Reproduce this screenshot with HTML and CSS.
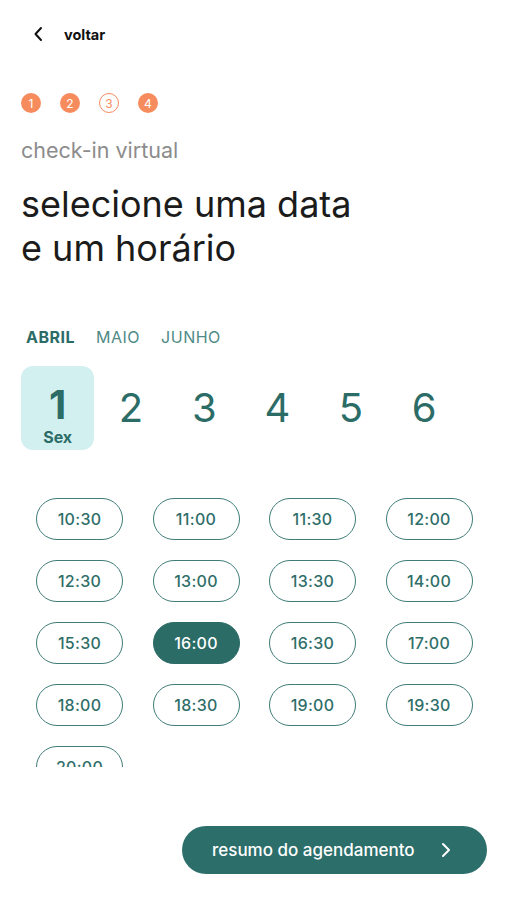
FILE: index.html
```html
<!DOCTYPE html>
<html lang="pt">
<head>
  <meta charset="UTF-8">
  <meta name="viewport" content="width=device-width, initial-scale=1.0">
  <title>Check-in virtual</title>
  <link rel="stylesheet" href="styles.css">
</head>
<body>

<div class="screen">
  <header class="topbar">
    <svg class="back-icon" width="12" height="16" viewBox="0 0 12 16">
      <path d="M8 2 L2.5 8 L8 14" fill="none" stroke="#111" stroke-width="2" stroke-linecap="round" stroke-linejoin="round"/>
    </svg>
    <span class="back-label">voltar</span>
  </header>

  <div class="steps">
    <span class="step">1</span>
    <span class="step">2</span>
    <span class="step current">3</span>
    <span class="step">4</span>
  </div>

  <p class="subtitle">check-in virtual</p>
  <h1>selecione uma data<br>e um horário</h1>

  <nav class="months">
    <span class="month active">ABRIL</span>
    <span class="month">MAIO</span>
    <span class="month">JUNHO</span>
  </nav>

  <div class="days">
    <div class="day selected">
      <span class="day-num">1</span>
      <span class="day-name">Sex</span>
    </div>
    <div class="day"><span class="day-num">2</span></div>
    <div class="day"><span class="day-num">3</span></div>
    <div class="day"><span class="day-num">4</span></div>
    <div class="day"><span class="day-num">5</span></div>
    <div class="day"><span class="day-num">6</span></div>
  </div>

  <div class="slots-scroll">
    <div class="slots">
      <button class="slot">10:30</button>
      <button class="slot">11:00</button>
      <button class="slot">11:30</button>
      <button class="slot">12:00</button>
      <button class="slot">12:30</button>
      <button class="slot">13:00</button>
      <button class="slot">13:30</button>
      <button class="slot">14:00</button>
      <button class="slot">15:30</button>
      <button class="slot selected">16:00</button>
      <button class="slot">16:30</button>
      <button class="slot">17:00</button>
      <button class="slot">18:00</button>
      <button class="slot">18:30</button>
      <button class="slot">19:00</button>
      <button class="slot">19:30</button>
      <button class="slot">20:00</button>
    </div>
  </div>

  <footer class="actions">
    <button class="next-btn">
      resumo do agendamento
      <svg width="12" height="18" viewBox="0 0 12 18">
        <path d="M3 3 L9 9 L3 15" fill="none" stroke="#fff" stroke-width="2" stroke-linecap="round" stroke-linejoin="round"/>
      </svg>
    </button>
  </footer>
</div>

</body>
</html>
```

FILE: styles.css
```css
body {
  margin: 0;
  font-family: Inter, "Noto Sans", Arial, sans-serif;
  background: #fff;
  color: #1b1b1b;
}

.screen {
  width: 507px;
  height: 900px;
  box-sizing: border-box;
  padding: 0 21px;
  display: flex;
  flex-direction: column;
}

.topbar {
  display: flex;
  align-items: center;
  height: 24px;
  margin-top: 22px;
  padding-left: 12px;
}

.back-icon {
  margin-right: 19px;
}

.back-label {
  font-size: 14.5px;
  font-weight: 700;
  color: #111;
}

.steps {
  display: flex;
  gap: 19px;
  margin-top: 47px;
}

.step {
  width: 20px;
  height: 20px;
  border-radius: 50%;
  background: #f68c5e;
  color: #fff;
  font-size: 12px;
  display: flex;
  align-items: center;
  justify-content: center;
  box-sizing: border-box;
}

.step.current {
  background: #fff;
  border: 1.5px solid #f68c5e;
  color: #f68c5e;
}

.subtitle {
  margin: 25px 0 0;
  font-size: 21.5px;
  color: #8c8c8c;
  line-height: 24px;
}

h1 {
  margin: 20px 0 0;
  font-size: 36px;
  font-weight: 400;
  line-height: 44px;
  color: #1b1b1b;
}

.months {
  display: flex;
  gap: 21px;
  margin-top: 57px;
  padding-left: 5px;
}

.month {
  font-size: 16px;
  color: #4f8a86;
  letter-spacing: 0.5px;
}

.month.active {
  font-weight: 700;
  color: #2b6c67;
}

.days {
  display: flex;
  margin-top: 19px;
}

.day {
  width: 73.3px;
  height: 84px;
  border-radius: 12px;
  display: flex;
  flex-direction: column;
  align-items: center;
  justify-content: center;
  color: #2b6c67;
}

.day.selected {
  background: #d3f0f1;
}

.day-num {
  font-size: 40px;
  line-height: 42px;
}

.day.selected .day-num {
  font-weight: 700;
  margin-top: 14px;
}

.day-name {
  font-size: 16px;
  font-weight: 700;
  line-height: 20px;
  margin-top: 1px;
}

.slots-scroll {
  margin-top: 48px;
  height: 269px;
  overflow: hidden;
}

.slots {
  display: grid;
  grid-template-columns: repeat(4, 87px);
  column-gap: 29.5px;
  row-gap: 20px;
  padding-left: 15px;
}

.slot {
  height: 42px;
  border: 1.5px solid #3f7d78;
  border-radius: 21px;
  background: #fff;
  color: #2f6e69;
  font-family: inherit;
  font-size: 16px;
  font-weight: 500;
  letter-spacing: 0.3px;
  padding: 0;
}

.slot.selected {
  background: #2b6c67;
  border-color: #2b6c67;
  color: #fff;
}

.actions {
  display: flex;
  justify-content: flex-end;
  margin-top: 59px;
}

.next-btn {
  width: 305px;
  height: 48px;
  border: none;
  border-radius: 24px;
  background: #2b6e6a;
  color: #fff;
  font-family: inherit;
  font-size: 17px;
  font-weight: 500;
  display: flex;
  align-items: center;
  padding: 0 35px 0 30px;
  justify-content: space-between;
  margin-right: -1px;
}
```
